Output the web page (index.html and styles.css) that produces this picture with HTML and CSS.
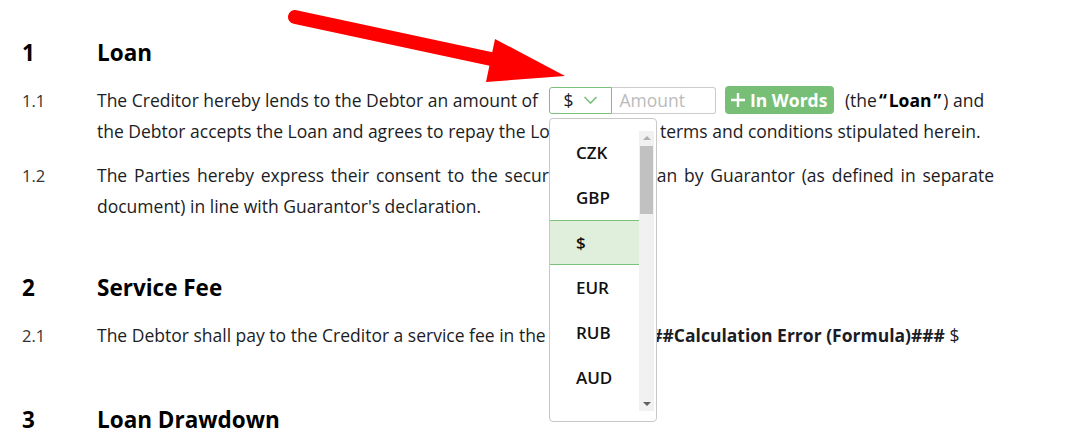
FILE: index.html
```html
<!doctype html>
<html lang="en">
<head>
  <meta charset="utf-8">
  <title>Loan Agreement</title>
  <link rel="stylesheet" href="styles.css">
</head>
<body>

  <div id="doc">

    <div class="clause title">
      <div class="num head">1</div>
      <h2 class="head">Loan</h2>
    </div>

    <div class="clause">
      <div class="num">1.1</div>
      <p class="text ragged">The Creditor hereby lends to the Debtor an amount of
        <span class="money">
          <span class="currency">$ <svg width="15" height="10" viewBox="0 0 15 10"><path d="M1.5 2 L7.5 8 L13.5 2" fill="none" stroke="#7cc07c" stroke-width="1.6"/></svg></span><span class="amount">Amount</span>
        </span>
        <span class="words"><svg width="18" height="18" viewBox="0 0 18 18"><path d="M9 2 V16 M2 9 H16" stroke="#fff" stroke-width="2.4"/></svg>In Words</span>
        (the<b class="term"><span class="q">“</span>Loan<span class="q">”</span></b>) and the Debtor accepts the Loan and agrees to repay the Loan under the terms and conditions stipulated herein.</p>
    </div>

    <div class="clause">
      <div class="num">1.2</div>
      <p class="text">The Parties hereby express their consent to the securing of the Loan by Guarantor (as defined in separate document) in line with Guarantor's declaration.</p>
    </div>

    <div class="clause title section">
      <div class="num head">2</div>
      <h2 class="head">Service Fee</h2>
    </div>

    <div class="clause">
      <div class="num">2.1</div>
      <p class="text">The Debtor shall pay to the Creditor a service fee in the amount of <b>###Calculation Error (Formula)###</b> $</p>
    </div>

    <div class="clause title section wide">
      <div class="num head">3</div>
      <h2 class="head">Loan Drawdown</h2>
    </div>

  </div>

  <!-- open currency list -->
  <div id="menu">
    <ul class="options">
      <li>CZK</li>
      <li>GBP</li>
      <li class="active">$</li>
      <li>EUR</li>
      <li>RUB</li>
      <li>AUD</li>
    </ul>
    <div class="scroll">
      <span class="up"></span>
      <span class="thumb"></span>
      <span class="down"></span>
    </div>
  </div>

  <svg id="arrow" width="600" height="100" viewBox="0 0 600 100">
    <line x1="295" y1="17" x2="505" y2="62" stroke="#ff0000" stroke-width="14" stroke-linecap="round"/>
    <polygon points="495,39 486,82 565,76" fill="#ff0000"/>
  </svg>

</body>
</html>
```

FILE: styles.css
```css
body {
    margin:0;
    background:#fff;
    color:#1c1c24;
    font-family:"Open Sans", sans-serif;
    font-size:17.5px;
}
#doc {
    padding:38px 85px 0 22px;
}
.clause {
    display:flex;
    margin-bottom:13px;
}
.title {
    margin-bottom:17px;
}
.section {
    margin-top:51px;
}
.wide {
    margin-top:54px;
}
.num {
    width:75px;
    flex:none;
    color:#333;
    font-size:16.5px;
    line-height:31px;
}
.head {
    font-size:22.5px;
    font-weight:700;
    color:#000;
    margin:0;
    line-height:30px;
}
.num.head {
    line-height:30px;
}
.text {
    margin:0;
    line-height:31px;
    text-align:justify;
    flex:1;
}
.text.ragged {
    text-align:left;
}
.term {
    color:#000;
}
.term .q {
    margin:0 2px;
}
.money {
    display:inline-flex;
    vertical-align:middle;
    margin:0 1px 0 7px;
    height:27px;
    position:relative;
    top:-2px;
}
.currency {
    display:inline-flex;
    align-items:center;
    gap:9px;
    width:63px;
    padding-left:13px;
    box-sizing:border-box;
    border:1px solid #7cc07c;
    border-radius:3px 0 0 3px;
    line-height:25px;
}
.amount {
    width:104px;
    box-sizing:border-box;
    padding-left:7px;
    border:1px solid #ccc;
    border-left:none;
    border-radius:0 3px 3px 0;
    color:#bbb;
    line-height:25px;
}
.words {
    display:inline-flex;
    align-items:center;
    gap:3px;
    vertical-align:middle;
    position:relative;
    top:-2px;
    background:#77bf77;
    color:#fff;
    font-weight:700;
    border-radius:4px;
    height:28px;
    padding:0 7px 0 4px;
    margin:0 6px 0 3px;
}
#menu {
    position:absolute;
    left:549px;
    top:118px;
    width:106px;
    height:302px;
    border:1px solid #c8c8c8;
    border-radius:4px;
    background:#fff;
    display:flex;
}
.options {
    list-style:none;
    margin:0;
    padding:11px 0 0 0;
    flex:1;
}
.options li {
    height:45px;
    line-height:45px;
    padding-left:26px;
    font-size:17px;
    font-weight:600;
    color:#111;
}
.options li.active {
    background:#dfefdc;
    border-top:1px solid #7cc07c;
    border-bottom:1px solid #7cc07c;
    height:43px;
    line-height:43px;
}
.scroll {
    width:15px;
    margin:12px 2px 10px 0;
    background:#f1f1f1;
    position:relative;
}
.thumb {
    position:absolute;
    left:1px;
    right:1px;
    top:15px;
    height:68px;
    background:#c1c1c1;
}
.up, .down {
    position:absolute;
    left:4px;
    width:0;
    height:0;
    border-left:4px solid transparent;
    border-right:4px solid transparent;
}
.up {
    top:5px;
    border-bottom:4px solid #b0b0b0;
}
.down {
    bottom:5px;
    border-top:4px solid #606060;
}
#arrow {
    position:absolute;
    left:0;
    top:0;
}
```
